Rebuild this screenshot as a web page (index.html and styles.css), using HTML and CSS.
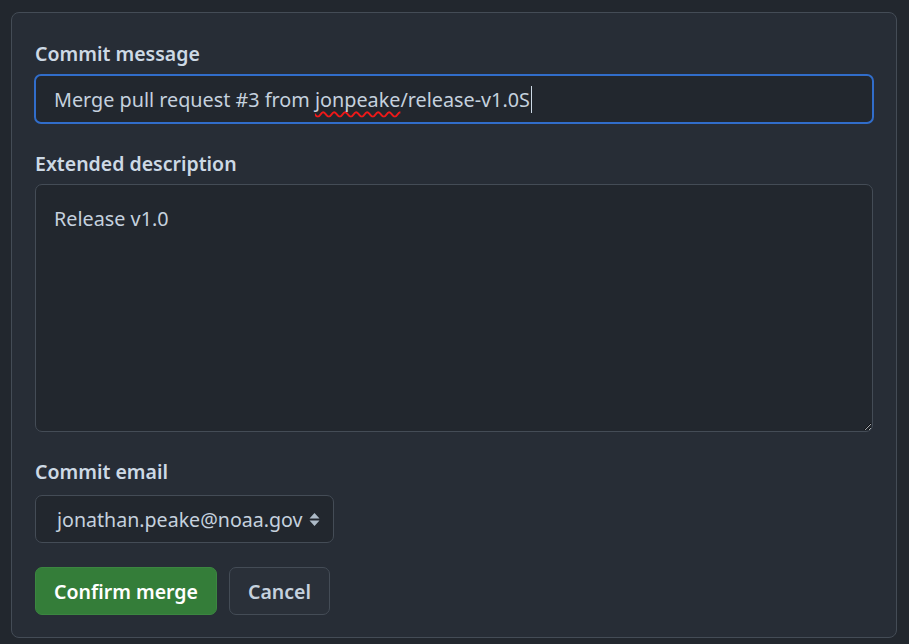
FILE: index.html
```html
<!DOCTYPE html>
<html lang="en">
<head>
<meta charset="utf-8">
<title>Confirm merge</title>
<link rel="stylesheet" href="styles.css">
</head>
<body>
<div class="panel">
  <div class="field">
    <label class="label">Commit message</label>
    <div class="input focused"><span>Merge pull request #3 from <span class="misspelled">jonpeake</span>/release-v1.0S</span><span class="caret"></span></div>
  </div>
  <div class="field">
    <label class="label">Extended description</label>
    <textarea class="textarea" spellcheck="false">Release v1.0</textarea>
  </div>
  <div class="field field-email">
    <label class="label">Commit email</label>
    <div class="select">
      <span>jonathan.peake@noaa.gov</span>
      <svg class="arrows" width="11" height="15" viewBox="0 0 11 15"><path d="M5.5 1 L10.5 6.5 H0.5 Z M0.5 8.5 H10.5 L5.5 14 Z" fill="#adbac7"/></svg>
    </div>
  </div>
  <div class="actions">
    <button class="btn btn-primary">Confirm merge</button>
    <button class="btn">Cancel</button>
  </div>
</div>
</body>
</html>
```

FILE: styles.css
```css
* { box-sizing: border-box; }
html, body { margin: 0; padding: 0; }
body {
  background: #22272e;
  font-family: "Noto Sans", "Segoe UI", sans-serif;
  color: #adbac7;
  width: 909px;
  height: 644px;
  overflow: hidden;
}
.panel {
  margin: 12px 12px 0 11px;
  height: 626px;
  border: 1px solid #444c56;
  border-radius: 8px;
  background: #272d36;
  padding: 27px 23px 0 23px;
  display: flex;
  flex-direction: column;
}
.field { display: flex; flex-direction: column; }
.field + .field { margin-top: 26px; }
.label {
  font-size: 19.5px;
  font-weight: 600;
  line-height: 28px;
  color: #cdd9e5;
  margin-bottom: 6px;
}
.field-email .label { margin-bottom: 9px; }
.input {
  height: 50px;
  border: 2.5px solid #316dca;
  border-radius: 7px;
  background: #22272e;
  display: flex;
  align-items: center;
  padding: 0 18px;
  margin-left: -1px;
  margin-right: -1px;
  font-size: 19.8px;
  color: #c5d1de;
  white-space: nowrap;
}
.misspelled {
  text-decoration: underline wavy #f01818;
  text-decoration-thickness: 1.5px;
  text-underline-offset: 4px;
  text-decoration-skip-ink: none;
}
.caret {
  display: inline-block;
  width: 1px;
  height: 27px;
  background: #cdd9e5;
  margin-left: 1px;
}
.textarea {
  height: 248px;
  width: 100%;
  border: 1px solid #444c56;
  border-radius: 7px;
  background: #22272e;
  color: #c5d1de;
  font-family: inherit;
  font-size: 19.8px;
  line-height: 28px;
  padding: 20px 18px;
  resize: both;
  outline: none;
  color-scheme: dark;
  margin: 0;
  display: block;
}
.select {
  width: 299px;
  height: 48px;
  border: 1px solid #444c56;
  border-radius: 7px;
  background: #22272e;
  display: flex;
  align-items: center;
  justify-content: space-between;
  padding: 0 13px 0 21px;
  font-size: 19.6px;
  color: #c5d1de;
}
.arrows { flex: none; }
.actions {
  display: flex;
  gap: 12px;
  margin-top: 24px;
}
.btn {
  height: 48px;
  padding: 0 18px;
  border: 1px solid #444c56;
  border-radius: 7px;
  background: #2a3039;
  color: #c5d1de;
  font-family: inherit;
  font-size: 19.5px;
  font-weight: 600;
}
.btn-primary {
  background: #347d39;
  border-color: #3b8640;
  color: #ffffff;
}
```
